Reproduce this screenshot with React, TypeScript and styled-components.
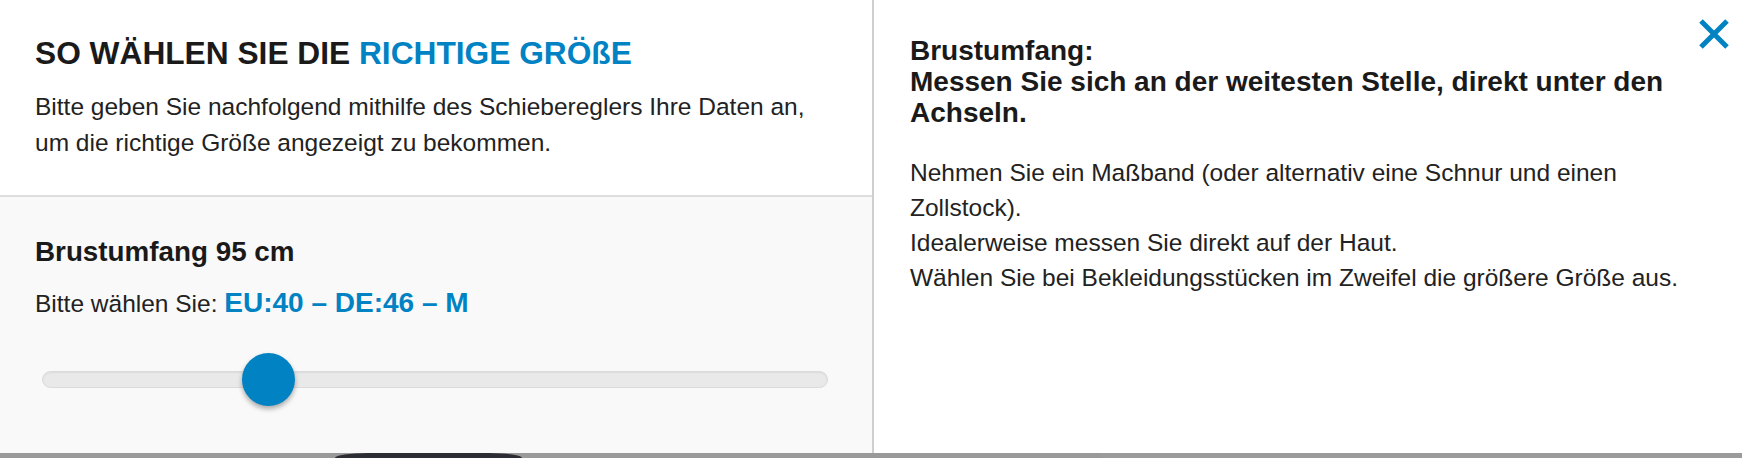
import React from 'react';
import styled, { createGlobalStyle } from 'styled-components';

const GlobalStyle = createGlobalStyle`
  html, body {
    margin: 0;
    padding: 0;
    background: #999;
  }
  body {
    font-family: "Liberation Sans", Arial, sans-serif;
    color: #1f1f1f;
  }
  * {
    box-sizing: border-box;
  }
`;

const BLUE = '#0082c3';

const Page = styled.div`
  width: 1742px;
  height: 458px;
  display: flex;
  flex-direction: column;
  overflow: hidden;
`;

const Modal = styled.div`
  height: 453px;
  display: grid;
  grid-template-columns: 874px 1fr;
  background: #fff;
`;

const LeftPanel = styled.section`
  display: flex;
  flex-direction: column;
  border-right: 2px solid #cfcfcf;
`;

const IntroBlock = styled.div`
  background: #fff;
  padding: 34px 35px 34px 35px;
  border-bottom: 2px solid #dedede;
`;

const Title = styled.h1`
  margin: 0;
  font-size: 31.7px;
  line-height: 38px;
  font-weight: 700;
  color: #1a1a1a;
`;

const Accent = styled.span`
  color: ${BLUE};
`;

const Lead = styled.p`
  margin: 16.5px 0 0;
  font-size: 24.5px;
  line-height: 36px;
  color: #222;
`;

const SliderBlock = styled.div`
  flex: 1;
  background: #f9f9f9;
  padding: 38px 35px 0 35px;
`;

const Measure = styled.h2`
  margin: 0;
  font-size: 27.8px;
  line-height: 33.4px;
  font-weight: 700;
  color: #1a1a1a;
`;

const Choice = styled.div`
  margin-top: 17.5px;
  font-size: 24.5px;
  line-height: 36px;
  color: #222;
`;

const SizeValue = styled.span`
  font-size: 28px;
  font-weight: 700;
  color: ${BLUE};
`;

const SliderWrap = styled.div`
  position: relative;
  height: 53px;
  margin: 31px 9px 0 7px;
  display: flex;
  align-items: center;
`;

const Track = styled.div`
  width: 100%;
  height: 17px;
  border-radius: 9px;
  background: #e9e9e9;
  border: 1px solid #dadada;
  box-shadow: inset 0 1px 2px rgba(0, 0, 0, 0.06);
`;

const Thumb = styled.div`
  position: absolute;
  top: 0;
  width: 53px;
  height: 53px;
  border-radius: 50%;
  background: ${BLUE};
  box-shadow: 0 3px 5px rgba(0, 0, 0, 0.32);
`;

const RightPanel = styled.section`
  position: relative;
  padding: 34.8px 36px 0 36px;
`;

const Close = styled.button`
  position: absolute;
  top: 19px;
  right: 13px;
  width: 30px;
  height: 30px;
  padding: 0;
  border: 0;
  background: transparent;
  cursor: pointer;
  display: flex;
`;

const HintTitle = styled.h3`
  margin: 0;
  font-size: 28px;
  line-height: 31px;
  font-weight: 700;
  color: #1a1a1a;
`;

const HintText = styled.p`
  margin: 27px 0 0;
  font-size: 24.5px;
  line-height: 35px;
  color: #222;
`;

const Backdrop = styled.div`
  flex: 1;
  display: flex;
  padding-left: 335px;
  background: linear-gradient(to right, #999 0, #999 1102px, #9b9b9b 1102px);
`;

const BackdropShape = styled.div`
  width: 187px;
  background: #2c2c33;
  border-radius: 40px 40px 0 0 / 6px 6px 0 0;
`;

const CloseIcon: React.FC = () => (
  <svg width="30" height="30" viewBox="0 0 30 30">
    <path d="M2 2 L28 28 M28 2 L2 28" stroke={BLUE} strokeWidth="5" fill="none" />
  </svg>
);

// track is 786px wide, thumb 53px
const SizeSlider: React.FC<{ value: number; min: number; max: number }> = ({ value, min, max }) => {
  const travel = 786 - 53;
  const left = ((value - min) / (max - min)) * travel;
  return (
    <SliderWrap>
      <Track />
      <Thumb style={{ left }} />
    </SliderWrap>
  );
};

export default function App() {
  return (
    <Page>
      <GlobalStyle />
      <Modal>
        <LeftPanel>
          <IntroBlock>
            <Title>
              SO WÄHLEN SIE DIE <Accent>RICHTIGE GRÖßE</Accent>
            </Title>
            <Lead>
              Bitte geben Sie nachfolgend mithilfe des Schiebereglers Ihre Daten an,
              <br />
              um die richtige Größe angezeigt zu bekommen.
            </Lead>
          </IntroBlock>
          <SliderBlock>
            <Measure>Brustumfang 95 cm</Measure>
            <Choice>
              Bitte wählen Sie: <SizeValue>EU:40 – DE:46 – M</SizeValue>
            </Choice>
            <SizeSlider value={95} min={80} max={135} />
          </SliderBlock>
        </LeftPanel>
        <RightPanel>
          <Close aria-label="Schließen">
            <CloseIcon />
          </Close>
          <HintTitle>
            Brustumfang:
            <br />
            Messen Sie sich an der weitesten Stelle, direkt unter den Achseln.
          </HintTitle>
          <HintText>
            Nehmen Sie ein Maßband (oder alternativ eine Schnur und einen Zollstock).
            <br />
            Idealerweise messen Sie direkt auf der Haut.
            <br />
            Wählen Sie bei Bekleidungsstücken im Zweifel die größere Größe aus.
          </HintText>
        </RightPanel>
      </Modal>
      <Backdrop>
        <BackdropShape />
      </Backdrop>
    </Page>
  );
}
